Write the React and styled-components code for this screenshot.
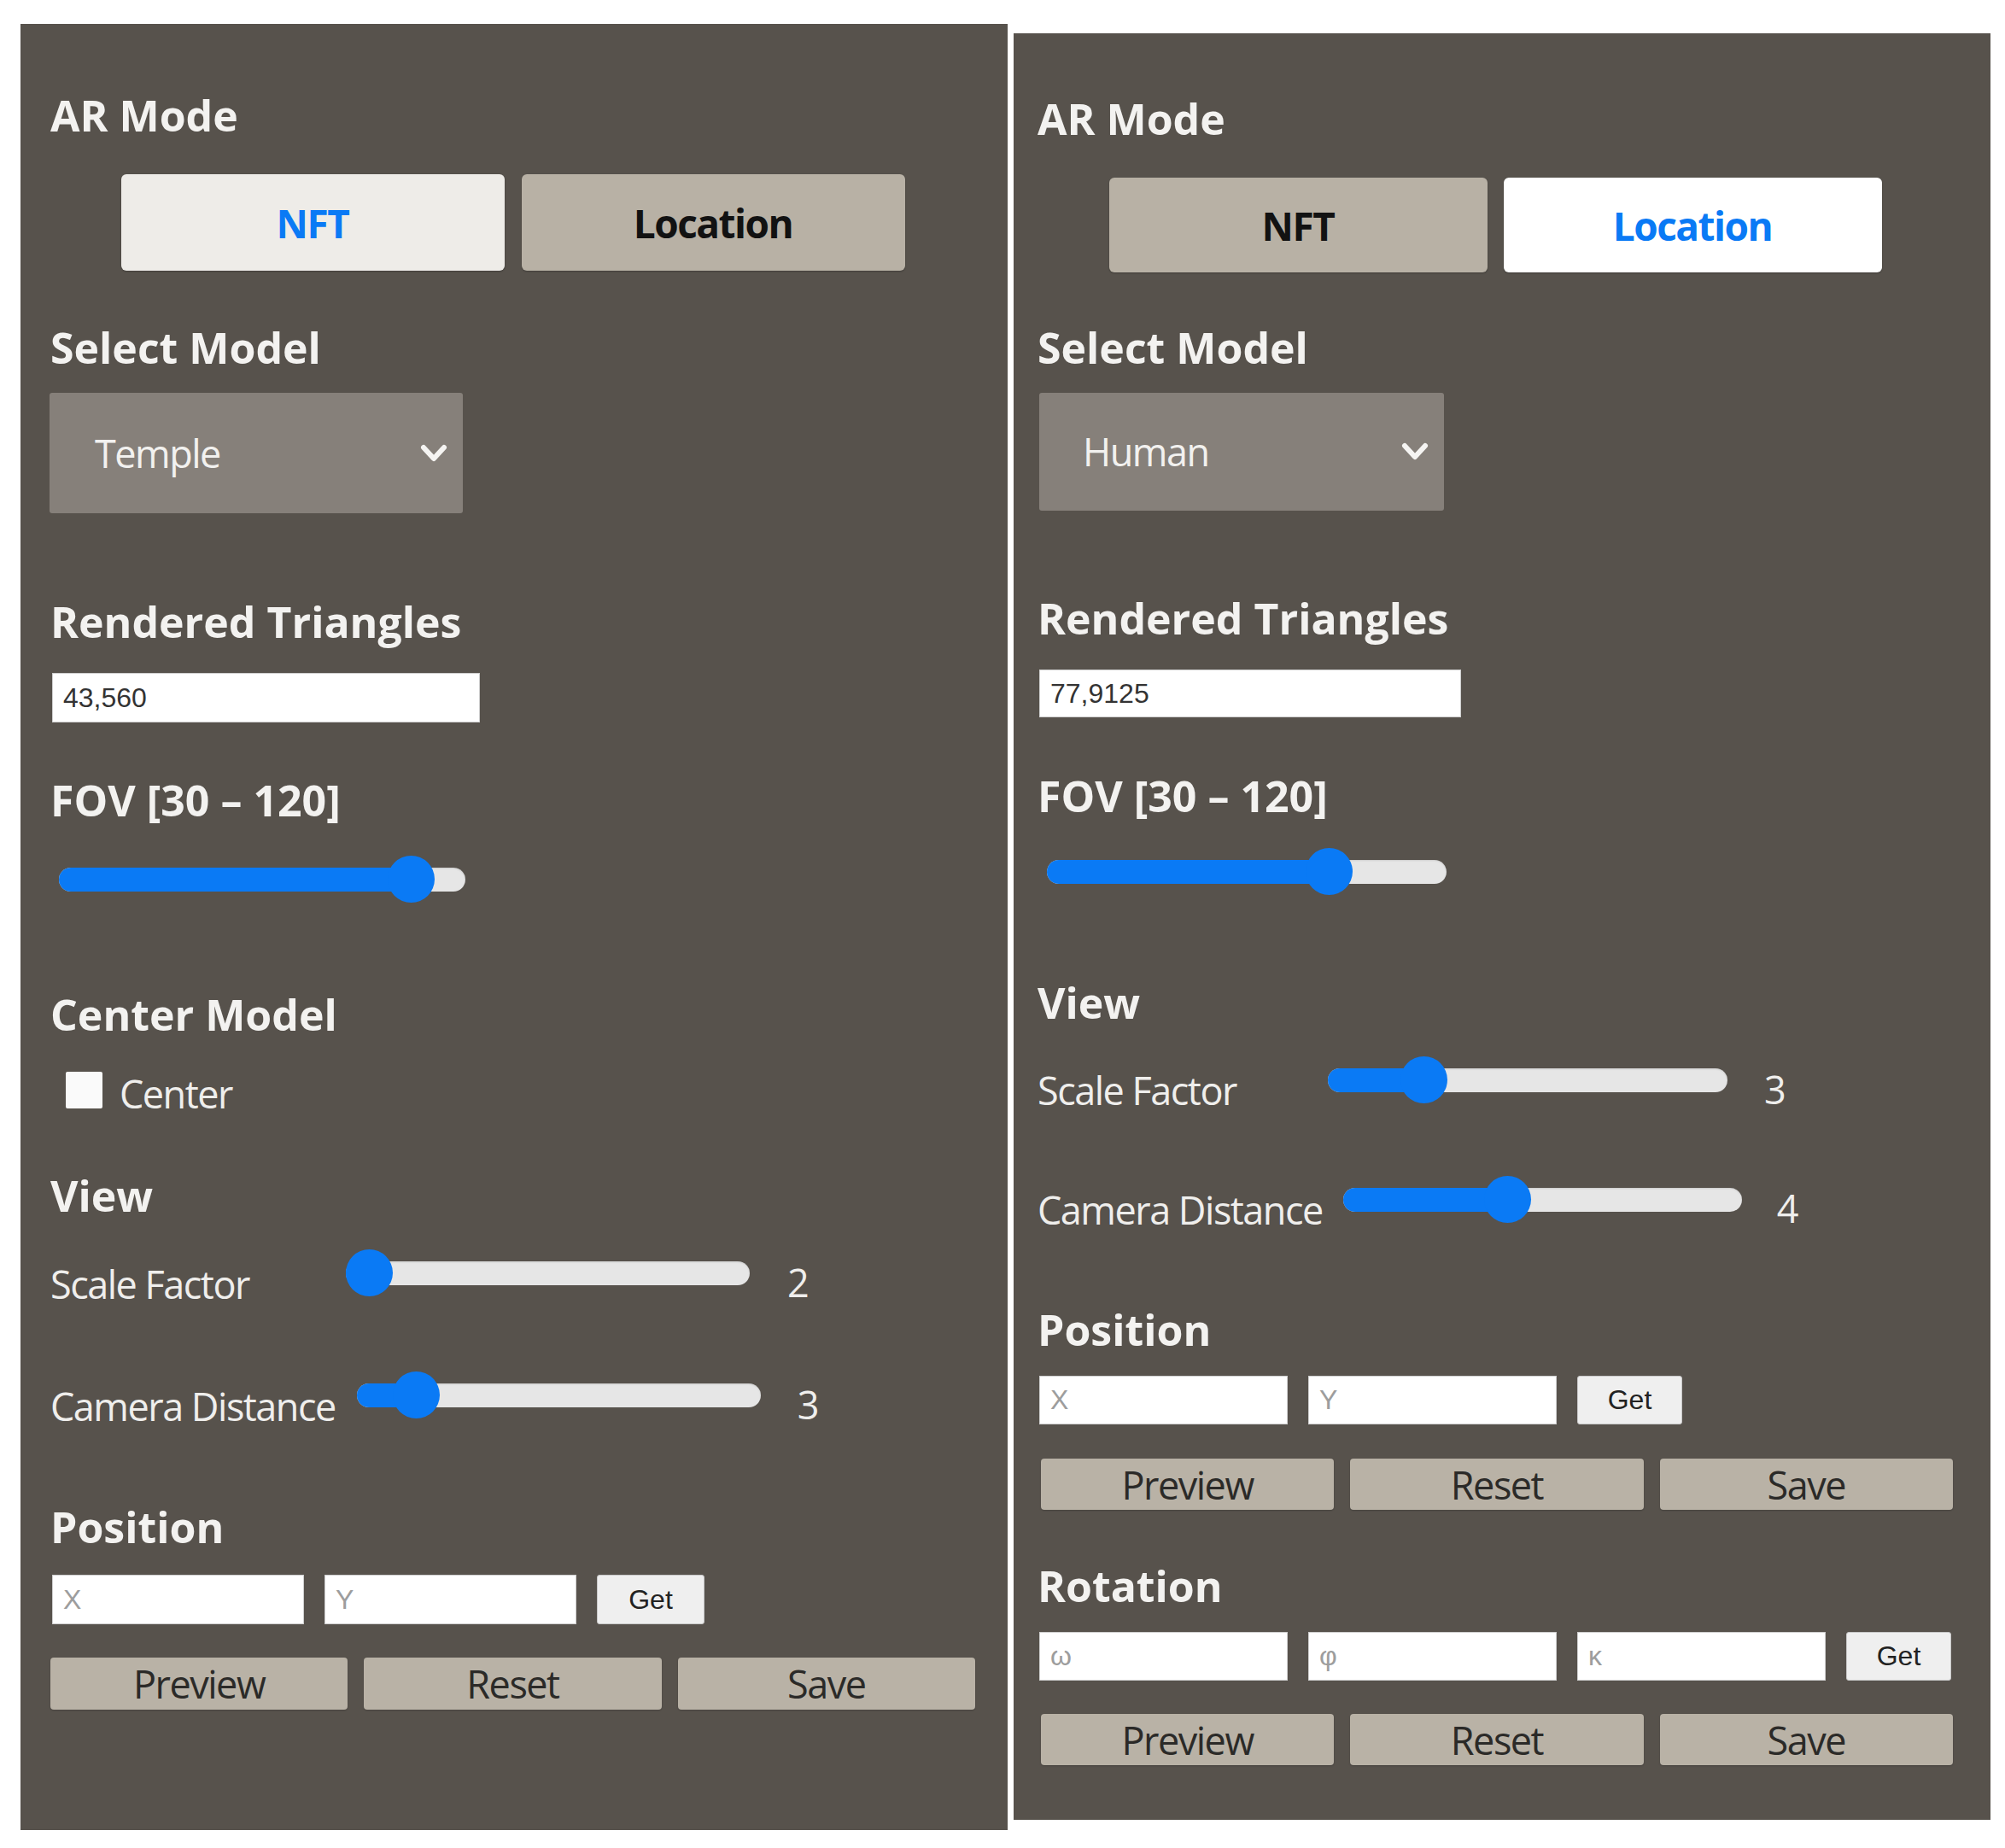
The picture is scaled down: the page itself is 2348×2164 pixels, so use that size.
import React from 'react';
import styled, { createGlobalStyle } from 'styled-components';

const GlobalStyle = createGlobalStyle`
  html, body { margin: 0; padding: 0; background: #ffffff; }
  body { font-family: "Open Sans", "Noto Sans", sans-serif; }
  * { box-sizing: border-box; }
`;

const Page = styled.div`
  display: flex;
  align-items: flex-start;
  gap: 7px;
  padding-left: 24px;
  width: 2348px;
  height: 2164px;
  background: #ffffff;
`;

const Panel = styled.section`
  width: ${(p) => p.$w}px;
  height: ${(p) => p.$h}px;
  margin-top: ${(p) => p.$top}px;
  padding: ${(p) => p.$pt}px ${(p) => p.$pr}px 0 ${(p) => p.$pl}px;
  background: #57524c;
  display: flex;
  flex-direction: column;
  align-items: flex-start;
`;

const Heading = styled.h2`
  margin: ${(p) => p.$mt || 0}px 0 0 0;
  font-family: "Open Sans", sans-serif;
  font-weight: 700;
  font-size: 50px;
  line-height: 60px;
  color: #f3f2f0;
  white-space: nowrap;
`;

const ModeGroup = styled.div`
  align-self: center;
  display: flex;
  gap: ${(p) => p.$gap}px;
  margin-top: ${(p) => p.$mt}px;
`;

const ModeButton = styled.button`
  width: ${(p) => p.$w}px;
  height: ${(p) => p.$h}px;
  border: none;
  border-radius: 6px;
  padding: 0;
  background: ${(p) => (p.$active ? p.$activeBg : '#b8b1a5')};
  color: ${(p) => (p.$active ? '#0a7af5' : '#121212')};
  font-family: "Open Sans", sans-serif;
  font-weight: 700;
  font-size: 46px;
  letter-spacing: -1.5px;
  box-shadow: 0 1px 2px rgba(0, 0, 0, 0.25);
`;

const SelectBox = styled.div`
  margin: ${(p) => p.$mt}px 0 0 ${(p) => p.$ml}px;
  width: ${(p) => p.$w}px;
  height: ${(p) => p.$h}px;
  display: flex;
  align-items: center;
  justify-content: space-between;
  padding: 0 16px 0 ${(p) => p.$pl}px;
  background: #86807a;
  border-radius: 3px;
  color: #f2f1ef;
  font-family: "Open Sans", sans-serif;
  font-size: 45px;
  line-height: 54px;
  letter-spacing: -1.5px;
`;

const TextInput = styled.input`
  display: block;
  margin: ${(p) => p.$mt || 0}px 0 0 ${(p) => p.$ml || 0}px;
  width: ${(p) => p.$w}px;
  height: ${(p) => p.$h}px;
  border: 1px solid #cfcfcf;
  border-radius: 0;
  background: #ffffff;
  padding: 0 12px;
  font-family: "Liberation Sans", Arial, sans-serif;
  font-size: 32px;
  color: #333333;
  outline: none;
  &::placeholder {
    color: #9d9d9d;
  }
`;

const SliderBox = styled.div`
  position: relative;
  flex-shrink: 0;
  display: flex;
  align-items: center;
  width: ${(p) => p.$w}px;
  height: 55px;
  margin: ${(p) => p.$mt || 0}px 0 0 ${(p) => p.$ml || 0}px;
`;

const Rail = styled.div`
  position: relative;
  width: 100%;
  height: 28px;
  border-radius: 14px;
  background: #e6e6e6;
  box-shadow: inset 0 1px 2px rgba(0, 0, 0, 0.12);
`;

const Fill = styled.div`
  position: absolute;
  left: 0;
  top: 0;
  bottom: 0;
  border-radius: 14px;
  background: #0a7af5;
`;

const Thumb = styled.div`
  position: absolute;
  top: 0;
  width: 55px;
  height: 55px;
  border-radius: 50%;
  background: #0a7af5;
`;

const Slider = ({ w, pct, mt, ml }) => {
  const left = pct * (w - 55);
  return (
    <SliderBox $w={w} $mt={mt} $ml={ml}>
      <Rail>
        <Fill style={{ width: left + 27 }} />
      </Rail>
      <Thumb style={{ left }} />
    </SliderBox>
  );
};

const SliderRow = styled.div`
  display: flex;
  align-items: flex-start;
  margin-top: ${(p) => p.$mt}px;
`;

const RowLabel = styled.span`
  min-width: ${(p) => p.$minw}px;
  margin: ${(p) => p.$off}px ${(p) => p.$gap}px 0 0;
  font-family: "Open Sans", sans-serif;
  font-size: 45px;
  line-height: 54px;
  letter-spacing: -1.5px;
  color: #efeeec;
  white-space: nowrap;
`;

const RowValue = styled.span`
  margin: ${(p) => p.$off}px 0 0 ${(p) => p.$gap}px;
  font-family: "Open Sans", sans-serif;
  font-size: 45px;
  line-height: 54px;
  color: #efeeec;
`;

const CheckRow = styled.label`
  display: flex;
  align-items: flex-start;
  gap: 20px;
  margin: ${(p) => p.$mt}px 0 0 ${(p) => p.$ml}px;
`;

const CheckBox = styled.span`
  width: 43px;
  height: 43px;
  margin-top: 1px;
  border-radius: 2px;
  background: #fafafa;
`;

const CheckText = styled.span`
  font-family: "Open Sans", sans-serif;
  font-size: 45px;
  line-height: 54px;
  letter-spacing: -1.5px;
  color: #efeeec;
`;

const InputRow = styled.div`
  display: flex;
  gap: 24px;
  margin: ${(p) => p.$mt}px 0 0 ${(p) => p.$ml}px;
`;

const GetButton = styled.button`
  width: ${(p) => p.$w}px;
  height: ${(p) => p.$h}px;
  padding: 0;
  border: 1px solid #c8c8c8;
  border-radius: 3px;
  background: #efefef;
  color: #222222;
  font-family: "Liberation Sans", Arial, sans-serif;
  font-size: 32px;
`;

const ActionRow = styled.div`
  align-self: stretch;
  display: flex;
  gap: 19px;
  margin: ${(p) => p.$mt}px 0 0 ${(p) => p.$ml || 0}px;
`;

const ActionButton = styled.button`
  flex: 1;
  height: ${(p) => p.$h}px;
  padding: 0;
  border: none;
  border-radius: 4px;
  background: #b9b2a6;
  color: #2b2a28;
  font-family: "Open Sans", sans-serif;
  font-size: 45px;
  letter-spacing: -1.5px;
  box-shadow: 0 1px 2px rgba(0, 0, 0, 0.2);
`;

const Chevron = () => (
  <svg width="36" height="24" viewBox="0 0 36 24">
    <polyline
      points="6,5 18,18 30,5"
      fill="none"
      stroke="#f5f4f2"
      strokeWidth="6"
      strokeLinecap="round"
      strokeLinejoin="round"
    />
  </svg>
);

const Actions = ({ mt, ml, h }) => (
  <ActionRow $mt={mt} $ml={ml}>
    <ActionButton $h={h}>Preview</ActionButton>
    <ActionButton $h={h}>Reset</ActionButton>
    <ActionButton $h={h}>Save</ActionButton>
  </ActionRow>
);

const LeftPanel = () => (
  <Panel $w={1156} $h={2115} $top={28} $pt={77} $pr={38} $pl={35}>
    <Heading>AR Mode</Heading>
    <ModeGroup $gap={20} $mt={39}>
      <ModeButton $w={449} $h={113} $active $activeBg="#eeece8">NFT</ModeButton>
      <ModeButton $w={449} $h={113}>Location</ModeButton>
    </ModeGroup>
    <Heading $mt={60}>Select Model</Heading>
    <SelectBox $mt={23} $ml={-1} $w={484} $h={141} $pl={53}>
      <span>Temple</span>
      <Chevron />
    </SelectBox>
    <Heading $mt={97}>Rendered Triangles</Heading>
    <TextInput $mt={30} $ml={2} $w={501} $h={58} defaultValue="43,560" />
    <Heading $mt={61}>FOV [30 – 120]</Heading>
    <Slider w={476} pct={0.914} mt={35} ml={10} />
    <Heading $mt={101}>Center Model</Heading>
    <CheckRow $mt={36} $ml={18}>
      <CheckBox />
      <CheckText>Center</CheckText>
    </CheckRow>
    <Heading $mt={62}>View</Heading>
    <SliderRow $mt={33}>
      <RowLabel $minw={321} $gap={25} $off={14}>Scale Factor</RowLabel>
      <Slider w={473} pct={0} />
      <RowValue $gap={44} $off={12}>2</RowValue>
    </SliderRow>
    <SliderRow $mt={75}>
      <RowLabel $minw={321} $gap={25} $off={14}>Camera Distance</RowLabel>
      <Slider w={473} pct={0.1} />
      <RowValue $gap={43} $off={12}>3</RowValue>
    </SliderRow>
    <Heading $mt={84}>Position</Heading>
    <InputRow $mt={26} $ml={2}>
      <TextInput $w={295} $h={58} placeholder="X" />
      <TextInput $w={295} $h={58} placeholder="Y" />
      <GetButton $w={126} $h={58}>Get</GetButton>
    </InputRow>
    <Actions mt={39} h={61} />
  </Panel>
);

const RightPanel = () => (
  <Panel $w={1144} $h={2092} $top={39} $pt={70} $pr={44} $pl={28}>
    <Heading>AR Mode</Heading>
    <ModeGroup $gap={19} $mt={39}>
      <ModeButton $w={443} $h={111}>NFT</ModeButton>
      <ModeButton $w={443} $h={111} $active $activeBg="#ffffff">Location</ModeButton>
    </ModeGroup>
    <Heading $mt={58}>Select Model</Heading>
    <SelectBox $mt={23} $ml={2} $w={474} $h={138} $pl={51}>
      <span>Human</span>
      <Chevron />
    </SelectBox>
    <Heading $mt={96}>Rendered Triangles</Heading>
    <TextInput $mt={30} $ml={2} $w={494} $h={56} defaultValue="77,9125" />
    <Heading $mt={62}>FOV [30 – 120]</Heading>
    <Slider w={468} pct={0.733} mt={31} ml={11} />
    <Heading $mt={96}>View</Heading>
    <SliderRow $mt={33}>
      <RowLabel $minw={316} $gap={24} $off={13}>Scale Factor</RowLabel>
      <Slider w={468} pct={0.206} />
      <RowValue $gap={43} $off={12}>3</RowValue>
    </SliderRow>
    <SliderRow $mt={73}>
      <RowLabel $minw={316} $gap={24} $off={13}>Camera Distance</RowLabel>
      <Slider w={467} pct={0.4} />
      <RowValue $gap={41} $off={11}>4</RowValue>
    </SliderRow>
    <Heading $mt={83}>Position</Heading>
    <InputRow $mt={24} $ml={2}>
      <TextInput $w={291} $h={57} placeholder="X" />
      <TextInput $w={291} $h={57} placeholder="Y" />
      <GetButton $w={123} $h={57}>Get</GetButton>
    </InputRow>
    <Actions mt={40} ml={4} h={60} />
    <Heading $mt={59}>Rotation</Heading>
    <InputRow $mt={24} $ml={2}>
      <TextInput $w={291} $h={57} placeholder="ω" />
      <TextInput $w={291} $h={57} placeholder="φ" />
      <TextInput $w={291} $h={57} placeholder="κ" />
      <GetButton $w={123} $h={57}>Get</GetButton>
    </InputRow>
    <Actions mt={39} ml={4} h={60} />
  </Panel>
);

export default function App() {
  return (
    <>
      <GlobalStyle />
      <Page>
        <LeftPanel />
        <RightPanel />
      </Page>
    </>
  );
}
